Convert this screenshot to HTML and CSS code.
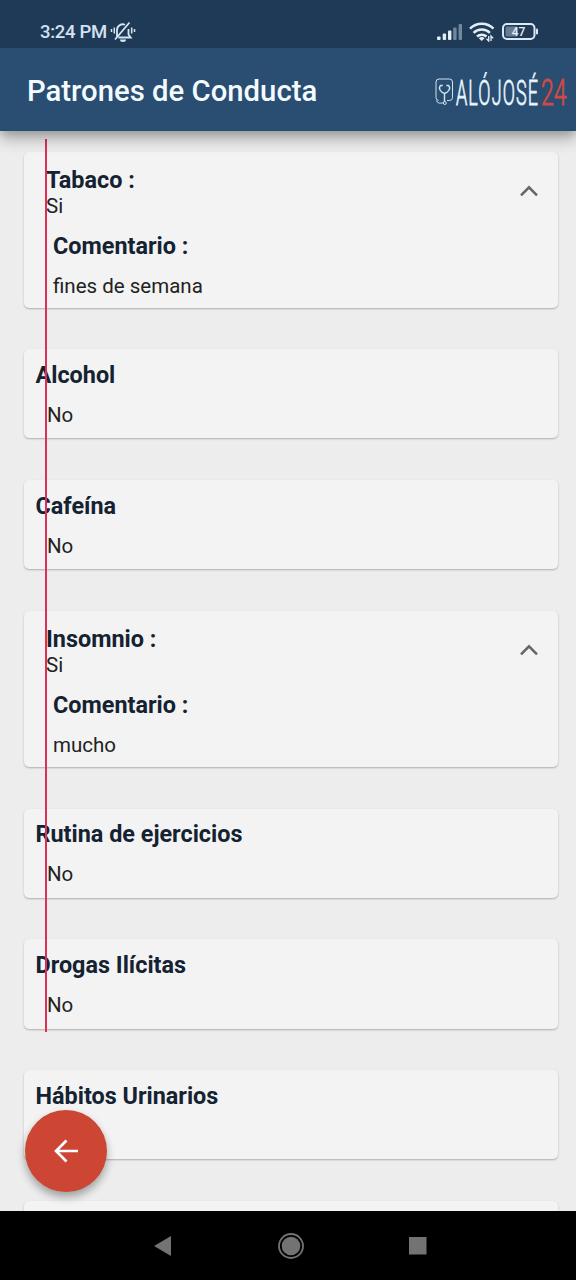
FILE: index.html
```html
<!DOCTYPE html>
<html lang="es">
<head>
<meta charset="utf-8">
<title>Patrones de Conducta</title>
<link rel="stylesheet" href="styles.css">
</head>
<body>
<div class="phone">
  <header class="top">
    <div class="status">
      <span class="clock">3:24 PM</span>
      <svg class="bell" width="26" height="22" viewBox="0 0 26 22" fill="none" stroke="#d8e6f3" stroke-width="1.8">
        <path d="M7 15.500V9a5.700 5.700 0 0 1 8-5.200M18.500 8v5.500l2.200 3H8.500M5 18.500 19.500 1.500"/>
        <path d="M4.300 6.500v6M1.500 8v3M21.700 6.500v6M24.500 8v3" stroke-width="1.500"/>
        <path d="M10 18.500h6a3 2.500 0 0 1-6 0z" fill="#d8e6f3" stroke="none"/>
      </svg>
      <div class="indicators">
        <svg width="27" height="18" viewBox="0 0 27 18">
          <g fill="#e2edf6"><rect x="1" y="13.500" width="3.600" height="3.500" rx="1"/><rect x="6.700" y="10.500" width="3.400" height="6.500" rx="1"/><rect x="12" y="7.500" width="3.400" height="9.500" rx="1"/></g>
          <g fill="#7188a0"><rect x="17.200" y="4.500" width="3.400" height="12.500" rx="1"/><rect x="22.600" y="1" width="3.400" height="16" rx="1"/></g>
        </svg>
        <svg class="wifi" width="26" height="20" viewBox="0 0 26 20" fill="none" stroke="#e2edf6" stroke-width="2.500">
          <path d="M1 6.700a16.500 16.500 0 0 1 23.500 0M4.600 10.800a11.500 11.500 0 0 1 16.300 0M8 14.500a7 7 0 0 1 9.500 0"/>
          <path d="M9.800 16.300a4.500 4.500 0 0 1 5.800 0L12.700 19z" fill="#e2edf6" stroke="none"/>
          <path d="M19.700 14v5l-2.200-2.200M22 19v-5l2.200 2.400" stroke-width="1.300"/>
        </svg>
        <svg class="battery" width="37" height="18" viewBox="0 0 37 18">
          <rect x="1" y="1" width="31.500" height="15" rx="4" fill="none" stroke="#dce8f5" stroke-width="2"/>
          <rect x="3.500" y="3.500" width="12" height="10" rx="1.500" fill="#667c93"/>
          <path d="M35 6.500v4" stroke="#dce8f5" stroke-width="2" stroke-linecap="round"/>
          <text class="charge" x="16.500" y="12.600" text-anchor="middle">47</text>
        </svg>
      </div>
    </div>
    <div class="appbar">
      <h1 class="title">Patrones de Conducta</h1>
      <svg class="logo" width="134" height="50" viewBox="0 -3 134 50">
        <g fill="none" stroke="#cfe3f2" stroke-width="1">
          <path d="M3.500 31.500a3 3 0 0 1-2.500-3V13a3 3 0 0 1 3-3h10.500a3 3 0 0 1 3 3v15.500a3 3 0 0 1-3 3H12"/>
          <path d="M1.500 31.500c.5 2.500 3 3 5 2.500h2"/>
          <path d="M7.800 16.500H5.600c-3 3 .5 7 3.900 8 3.500-1 7-5 4-8h-2.200M9.500 24.500V33" stroke-width="1.400"/>
          <circle cx="9.800" cy="34" r="1.500"/>
        </g>
        <text class="brand" transform="translate(21 36) scale(.5 1)">ALÓJOSÉ</text>
        <text class="brand red" transform="translate(106 36) scale(.64 1)">24</text>
      </svg>
    </div>
  </header>

  <main class="content">
    <section class="card open">
      <div class="head">
        <div><h2>Tabaco :</h2><p>Si</p></div>
        <svg class="chevron" width="20" height="14" viewBox="0 0 20 14"><path d="M2 11.300 10 3.300l8 8" fill="none" stroke="#666" stroke-width="2.600"/></svg>
      </div>
      <div class="comment"><h2>Comentario :</h2><p>fines de semana</p></div>
    </section>
    <section class="card"><h2>Alcohol</h2><p>No</p></section>
    <section class="card"><h2>Cafeína</h2><p>No</p></section>
    <section class="card open">
      <div class="head">
        <div><h2>Insomnio :</h2><p>Si</p></div>
        <svg class="chevron" width="20" height="14" viewBox="0 0 20 14"><path d="M2 11.300 10 3.300l8 8" fill="none" stroke="#666" stroke-width="2.600"/></svg>
      </div>
      <div class="comment"><h2>Comentario :</h2><p>mucho</p></div>
    </section>
    <section class="card"><h2>Rutina de ejercicios</h2><p>No</p></section>
    <section class="card"><h2>Drogas Ilícitas</h2><p>No</p></section>
    <section class="card"><h2>Hábitos Urinarios</h2></section>
    <section class="card"></section>
    <div class="guide"></div>
    <button class="back" aria-label="Volver">
      <svg width="26" height="26" viewBox="0 0 26 26"><path d="M25 13H3M13.500 2.500 3 13l10.500 10.500" fill="none" stroke="#fff" stroke-width="2.700"/></svg>
    </button>
  </main>

  <nav class="nav">
    <svg width="18" height="22" viewBox="0 0 18 22"><path d="M0 11 17 1v20z" fill="#737373"/></svg>
    <svg width="26" height="26" viewBox="0 0 26 26"><circle cx="13" cy="13" r="12" fill="none" stroke="#737373" stroke-width="1.800"/><circle cx="13" cy="13" r="9.300" fill="#737373"/></svg>
    <svg width="18" height="18" viewBox="0 0 18 18"><rect width="17.500" height="17.500" fill="#737373"/></svg>
  </nav>
</div>
</body>
</html>
```
FILE: styles.css
```css
* { box-sizing: border-box; }
body { margin: 0; font-family: Roboto, "Liberation Sans", sans-serif; }
h1, h2, p { margin: 0; }
svg { display: block; }
.phone {
  width: 576px;
  height: 1280px;
  display: flex;
  flex-direction: column;
  overflow: hidden;
  background: #000;
}
.top {
  position: relative;
  z-index: 2;
  flex: none;
  box-shadow: 0 8px 14px rgba(0, 0, 0, .28), 0 2px 8px rgba(0, 0, 0, .14);
}
.status {
  height: 48px;
  padding: 15px 37px 0 40px;
  display: flex;
  align-items: center;
  background: #1f3a56;
}
.clock { font-size: 18.500px; font-weight: 500; letter-spacing: -.3px; color: #d3e2f0; }
.bell { margin-left: 3px; }
.indicators { display: flex; align-items: center; margin-left: auto; }
.wifi { margin-left: 6px; }
.battery { margin-left: 7px; }
.charge { font-size: 12px; font-weight: 500; fill: #e5eef8; }
.appbar {
  height: 83px;
  padding: 2px 7px 0 27px;
  display: flex;
  align-items: center;
  justify-content: space-between;
  background: #2a4d72;
}
.title {
  font-size: 29.300px;
  line-height: 34px;
  font-weight: 500;
  color: #f3fbff;
}
.logo { overflow: visible; }
.brand { font-size: 36px; font-weight: 300; letter-spacing: 2.200px; fill: #e9f7ff; stroke: #e9f7ff; stroke-width: .8px; }
.brand.red { letter-spacing: 0; fill: #d24a45; stroke: #d24a45; }
.content {
  position: relative;
  height: 1080px;
  flex: none;
  padding: 20.500px 18px 0 24px;
  display: flex;
  flex-direction: column;
  gap: 41.600px;
  overflow: hidden;
  background: #ededed;
}
.card {
  flex: none;
  height: 89.200px;
  padding: 12.500px 12px;
  background: #f3f3f3;
  border-radius: 5px;
  box-shadow: 0 1px 2px rgba(0, 0, 0, .27);
}
.card.open { height: 156.200px; padding: 15.500px 18px 0 22px; }
.card h2 {
  font-size: 23.400px;
  line-height: 27px;
  font-weight: 700;
  color: #142231;
}
.card:not(.open) h2 { margin-left: -.500px; }
.card p {
  padding: 14px 0 0 11px;
  font-size: 20.500px;
  line-height: 24px;
  color: #222;
}
.head { display: flex; justify-content: space-between; }
.card .head p { padding: 0; }
.chevron { margin: 17px 1px 0 0; }
.comment { padding: 15px 0 0 7px; }
.card .comment p { padding: 14px 0 0; }
.guide {
  position: absolute;
  left: 45px;
  top: 8px;
  width: 2px;
  height: 893px;
  background: #dc3056;
}
.back {
  position: absolute;
  left: 25px;
  bottom: 19.500px;
  width: 82px;
  height: 82px;
  padding: 0;
  display: grid;
  place-items: center;
  border: 0;
  border-radius: 50%;
  background: #cd4634;
  box-shadow: 0 5px 9px rgba(0, 0, 0, .33);
}
.nav {
  flex: 1;
  padding: 0 149px 0 154px;
  display: flex;
  align-items: center;
  justify-content: space-between;
  background: #000;
}
```
